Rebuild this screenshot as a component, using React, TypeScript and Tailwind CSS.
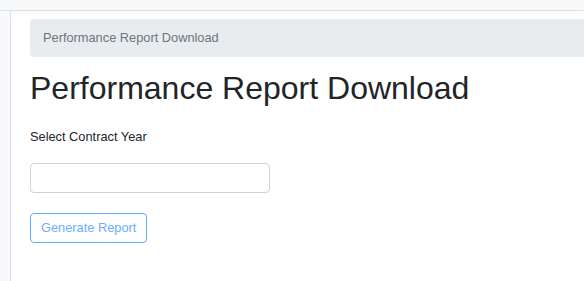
import React from "react";

export default function App() {
  return (
    <div className="w-[584px] h-[281px] overflow-hidden bg-white flex flex-col font-['Liberation_Sans',Arial,sans-serif]">
      <div className="h-[11px] shrink-0 bg-[#f8f9fa] border-b border-[#dee2e6] shadow-[0_2px_6px_rgba(0,0,0,0.04)]" />
      <div className="flex flex-1">
        <div className="w-[11px] shrink-0 bg-[#f8f9fa] border-r border-[#dee2e6]" />
        <main className="flex-1 pl-[19px] pt-[8px]">
          <div className="w-[600px] h-[38px] bg-[#e9ecef] rounded-[4px] flex items-center pl-[13px] text-[12.8px] text-[#6c757d]">
            Performance Report Download
          </div>
          <h1 className="mt-[12px] text-[32px] leading-[38px] text-[#212529]">
            Performance Report Download
          </h1>
          <label className="block mt-[22px] text-[12.8px] leading-[16px] text-[#212529]">
            Select Contract Year
          </label>
          <input
            type="text"
            className="block mt-[18px] w-[240px] h-[30px] border border-[#ced4da] rounded-[4px] px-2 text-[13px] focus:outline-none"
          />
          <button className="mt-[20px] h-[30px] px-[10px] border border-[#5fabff] rounded-[4px] text-[12.8px] text-[#6aaeff] bg-white">
            Generate Report
          </button>
        </main>
      </div>
    </div>
  );
}
